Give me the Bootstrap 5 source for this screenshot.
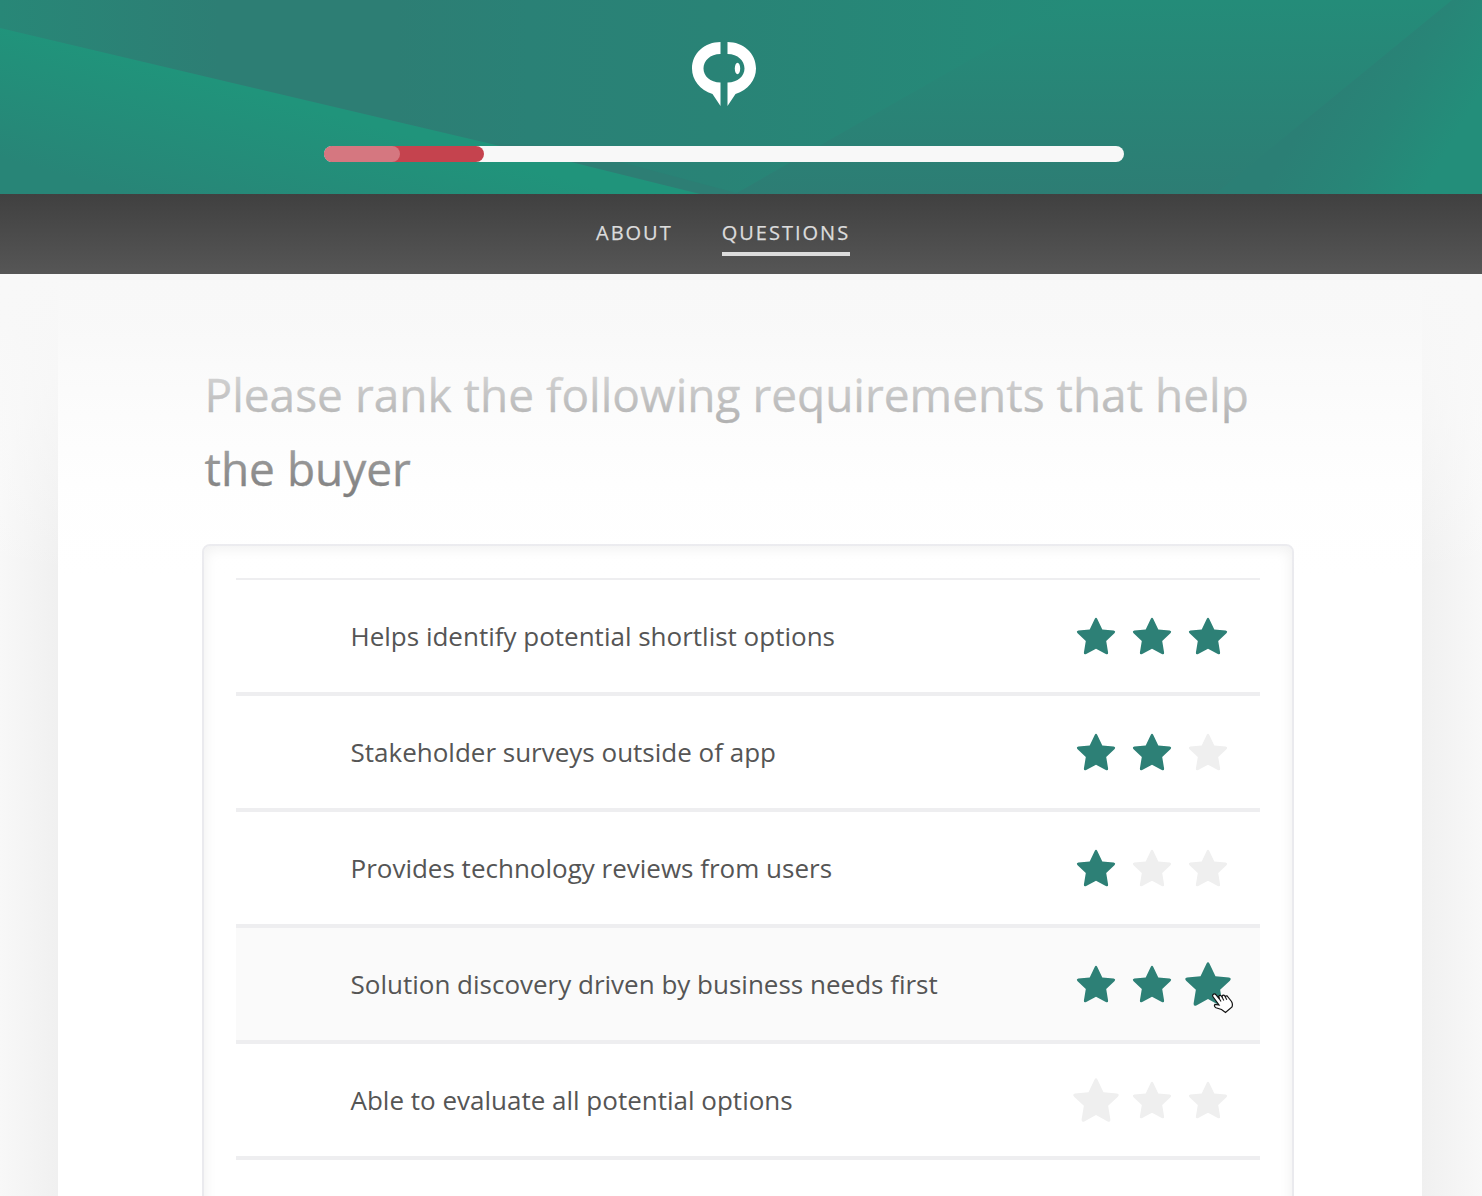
<!DOCTYPE html>
<html lang="en">

<head>
    <meta charset="utf-8">
    <meta name="viewport" content="width=device-width, initial-scale=1">
    <title>Questions</title>
    <link rel="stylesheet" href="https://cdn.jsdelivr.net/npm/bootstrap@5.3.0/dist/css/bootstrap.min.css">
    <style>
        body {
            font-family: "Open Sans", "Noto Sans", sans-serif;
            color: #555;
            height: 1196px;
            overflow: hidden;
            background: #f7f7f7;
        }

        .top-banner {
            height: 194px;
            background: #298376;
        }

        .banner-art {
            position: absolute;
            inset: 0;
            width: 100%;
            height: 100%;
        }

        /* the header content sits 17px left of the window's centre */
        .banner-inner {
            width: 800px;
            margin-left: 324px;
            padding-top: 42px;
        }

        .steps-bar {
            height: 16px;
            margin-top: 40px;
            border-radius: 8px;
            background: #f8f8f8;
        }

        .steps-bar .progress-bar {
            border-radius: 8px;
            background: #c5434e;
        }

        .steps-bar .step-done {
            height: 16px;
            background: #d57780;
        }

        .tab-strip {
            height: 80px;
            padding-left: 596px;
            background: linear-gradient(#404040, #565656);
        }

        .tab-strip .nav {
            gap: 49px;
        }

        .tab-strip .nav-link {
            margin-top: 22px;
            height: 40px;
            padding: 0;
            font-size: 20px;
            line-height: 34px;
            letter-spacing: 2px;
            color: #dcdcdc;
            -webkit-text-stroke: .25px #dcdcdc;
            border-bottom: 4px solid transparent;
            border-radius: 0;
        }

        .tab-strip .nav-link.active {
            border-bottom-color: #dcdcdc;
        }

        /* soft shade on both sides of the sheet */
        .page-area {
            height: 922px;
            padding: 0 60px 0 58px;
            background: linear-gradient(90deg, #f8f8f8 0, #f0f0f0 58px, #f0f0f0 calc(100% - 60px), #f8f8f8 100%);
        }

        .sheet {
            height: 922px;
            background: #fff;
            padding: 83px 128px 0 144px;
        }

        .sheet h1 {
            margin: 0 0 39px 2.5px;
            font-size: 46px;
            font-weight: 400;
            line-height: 74px;
            color: #555;
            -webkit-text-stroke: .4px #555;
        }

        .scroll-fade {
            position: absolute;
            left: 0;
            right: 0;
            top: 0;
            height: 300px;
            background: linear-gradient(#f8f8f8 0, rgba(248, 248, 248, .95) 50px, rgba(249, 249, 249, .78) 98px, rgba(250, 250, 250, .58) 144px, rgba(252, 252, 252, .27) 216px, rgba(255, 255, 255, 0) 300px);
        }

        .rank-box {
            height: 700px;
            border: 2px solid #eaeaee;
            border-radius: 8px;
            padding: 32px;
            background: #fff;
            box-shadow: inset 0 2px 14px rgba(0, 0, 0, .07);
        }

        .rank-list {
            border-top: 2px solid #eeeef0;
        }

        .rank-row {
            height: 116px;
            padding: 0 24px 0 114.5px;
            border-bottom: 4px solid #eeeef0;
            font-size: 26px;
        }

        .rank-row.hovered {
            background: #fafafa;
        }

        .star {
            width: 56px;
            height: 56px;
            fill: #efefef;
        }

        .star.on {
            fill: #2d8076;
        }

        .star.big {
            transform: scale(1.19);
        }

        .pointer {
            position: absolute;
            right: 3px;
            bottom: -2px;
            width: 21px;
            height: 21px;
        }
    </style>
</head>

<body>
    <svg class="d-none">
        <symbol id="star" viewBox="0 -0.7 56 56">
            <path d="M26.7 10.2Q28 8 29.3 10.2L34.3 20.7L45.6 21.9Q48.2 22.5 46.4 24.5L38.2 32.2L40.1 43.7Q40.3 46.4 37.8 45.4L28 40L18.200 45.400Q15.700 46.400 15.900 43.700L17.800 32.200L9.600 24.500Q7.800 22.500 10.400 21.900L21.700 20.700Z" />
        </symbol>
    </svg>

    <header class="top-banner position-relative">
        <svg class="banner-art" viewBox="0 0 1482 194" preserveAspectRatio="none">
            <defs>
                <linearGradient id="gBack" gradientUnits="userSpaceOnUse" x1="0" y1="0" x2="1100" y2="0">
                    <stop offset="0" stop-color="#288777" />
                    <stop offset=".2" stop-color="#2d7e74" />
                    <stop offset=".36" stop-color="#2d7e74" />
                    <stop offset=".48" stop-color="#2a8176" />
                    <stop offset=".65" stop-color="#298376" />
                    <stop offset="1" stop-color="#248c79" />
                </linearGradient>
                <linearGradient id="gLeft" gradientUnits="userSpaceOnUse" x1="240" y1="88" x2="205" y2="215">
                    <stop offset="0" stop-color="#20947b" />
                    <stop offset="1" stop-color="#288577" />
                </linearGradient>
                <linearGradient id="gMid" gradientUnits="userSpaceOnUse" x1="1000" y1="0" x2="1000" y2="194">
                    <stop offset="0" stop-color="#248c79" />
                    <stop offset="1" stop-color="#2d7d74" />
                </linearGradient>
                <linearGradient id="gRight" gradientUnits="userSpaceOnUse" x1="1310" y1="110" x2="1430" y2="180">
                    <stop offset="0" stop-color="#2b7f75" />
                    <stop offset=".5" stop-color="#288577" />
                    <stop offset="1" stop-color="#238e7a" />
                </linearGradient>
            </defs>
            <rect width="1482" height="194" fill="url(#gBack)" />
            <path d="M480 143L560 146L740 194H690Z" fill="#2d7e74" />
            <path d="M0 28L500 146L575 163L700 194H0Z" fill="url(#gLeft)" />
            <path d="M735 194L1075 0H1482V194Z" fill="url(#gMid)" />
            <path d="M1215 194L1452 0H1482V194Z" fill="url(#gRight)" />
        </svg>
        <div class="banner-inner position-relative">
            <svg class="d-block mx-auto" width="64" height="64" viewBox="0 0 64 64" fill="#fff">
                <path d="M28.500 0V12C18 12 11.500 19 11.500 26.500S18 40.500 28.500 40.500V64L20.500 52C8 48 0 38 0 26.500C0 11 13 0 28.500 0Z" />
                <path d="M35.500 0V12C46 12 52.500 19 52.500 26.500S46 40.500 35.500 40.500V64L43.500 52C56 48 64 38 64 26.500C64 11 51 0 35.500 0Z" />
                <ellipse cx="45.500" cy="26.500" rx="2.700" ry="5.700" />
            </svg>
            <div class="progress steps-bar">
                <div class="progress-bar" style="width: 20%">
                    <div class="progress-bar step-done" style="width: 47.5%"></div>
                </div>
            </div>
        </div>
    </header>

    <nav class="tab-strip">
        <div class="nav">
            <a class="nav-link" href="#">ABOUT</a>
            <a class="nav-link active" href="#">QUESTIONS</a>
        </div>
    </nav>

    <main class="page-area position-relative overflow-hidden">
        <div class="sheet">
            <h1>Please rank the following requirements that help the buyer</h1>
            <div class="rank-box">
                <div class="rank-list" id="rankList"></div>
            </div>
        </div>
        <div class="scroll-fade pe-none"></div>
    </main>

    <script src="https://cdn.jsdelivr.net/npm/bootstrap@5.3.0/dist/js/bootstrap.bundle.min.js"></script>
    <script>
        // big = index of the enlarged star
        const requirements = [
            { text: 'Helps identify potential shortlist options', stars: 3 },
            { text: 'Stakeholder surveys outside of app', stars: 2 },
            { text: 'Provides technology reviews from users', stars: 1 },
            { text: 'Solution discovery driven by business needs first', stars: 3, big: 2, hovered: true },
            { text: 'Able to evaluate all potential options', stars: 0, big: 0 }
        ];

        const pointer = `
            <svg class="pointer" viewBox="0 0 21 21">
                <path d="M1 1.500Q2.500 0 4 1.800L7.500 6L6.800 3.300Q8 1.300 9.800 3.500L10.500 5L10 3Q11.300 1.200 13 3.200L13.700 4.800L13.300 3.300Q15 2 16 4L19.500 8.500Q21 11 20 14L13.500 19.500L9.500 16.500L4 14.800Q1.500 13 3 11.500L7 12L1.200 4Q.2 2.500 1 1.500Z" fill="#fff" stroke="#111" stroke-width="1.200" />
                <path d="M7.500 6L9 8.500M10.500 5L11.800 7.500M13.700 4.800L14.800 6.800" fill="none" stroke="#111" stroke-width="1.100" />
            </svg>`;

        const list = document.getElementById('rankList');
        requirements.forEach(item => {
            let stars = '';
            for (let i = 0; i < 3; i++) {
                const on = i < item.stars ? ' on' : '';
                const big = i === item.big ? ' big' : '';
                stars += `<svg class="star${on}${big}"><use href="#star" /></svg>`;
            }
            list.innerHTML += `
                <div class="rank-row d-flex align-items-center justify-content-between ${item.hovered ? 'hovered' : ''}">
                    <span>${item.text}</span>
                    <div class="d-flex position-relative">${stars}${item.hovered ? pointer : ''}</div>
                </div>`;
        });
    </script>
</body>

</html>
